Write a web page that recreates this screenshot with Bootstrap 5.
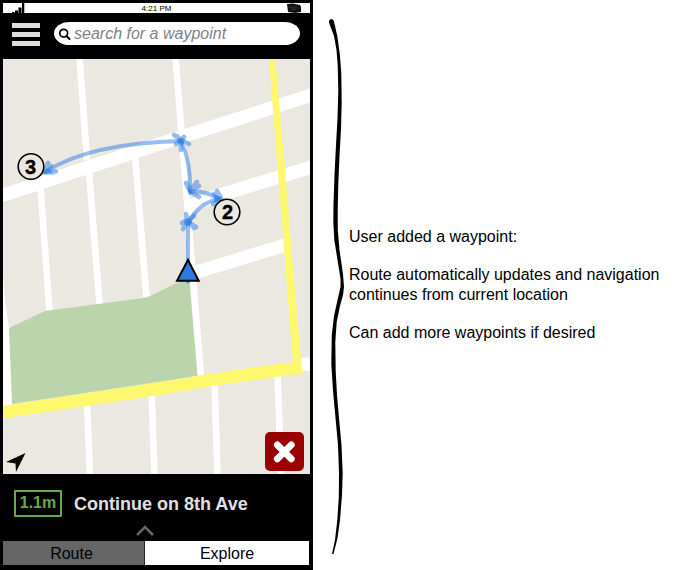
<!DOCTYPE html>
<html lang="en">
<head>
<meta charset="utf-8">
<meta name="viewport" content="width=device-width, initial-scale=1">
<title>Waypoint navigation</title>
<link href="https://cdn.jsdelivr.net/npm/bootstrap@5.3.0/dist/css/bootstrap.min.css" rel="stylesheet">
<style>
body{font-family:"Liberation Sans",Arial,sans-serif;font-size:16px;line-height:19.2px;color:#000;width:700px;height:570px;overflow:hidden}
.phone{width:313px;height:570px;background:#000;padding:3px 3px 0}
.statusbar{height:10px;width:307px;background:#fff;font-size:8px;line-height:11px}
.statusbar svg{display:block}
.topbar{height:46px;padding:9px 10px 12px 9px;width:307px}
.menu-btn{width:28px;margin-right:14px;line-height:0}
.menu-btn svg,.searchbox svg{display:block}
.searchbox{height:23px;width:246px;border-radius:16px/12px;padding-left:4px;color:#7f7f88;font-style:italic}
.map-area{width:307px;height:415px}
.map-area svg{display:block}
.close-btn{right:6px;bottom:3px;width:39px;height:39px;border-radius:5px;background:#900}
.directions{height:67px;padding:16px 0 0 11px;color:#e0e0e0;font-size:18px;font-weight:700}
.dist{width:48px;height:27px;border:2px solid #6aa84f;color:#6aa84f;font-size:16px;line-height:21px;border-radius:1px;margin-right:12px}
.street{padding-top:5px}
.expander{left:132px;bottom:4px}
.tabs{height:24px;width:306px;line-height:25px}
.tab-route{width:141px;padding-right:4px;background:#666}
.notes{padding:227px 0 0 5px}
.notes p{margin:0 0 19.2px;white-space:nowrap}
</style>
</head>
<body class="bg-white">
<div class="d-flex">
  <main class="phone d-flex flex-column flex-shrink-0">
    <div class="statusbar d-flex justify-content-center position-relative">
      <svg class="position-absolute start-0 top-0" width="24" height="10"><path d="M9 10V9h2.500v1zM12 10V7.500h3V10zM15.500 10V4.500h3V10zM19 10V0h2.300v10z"/></svg>
      <span>4:21 PM</span>
      <svg class="position-absolute end-0 top-0" width="25" height="10"><path d="M2 1l6 -.5 7 1.500 1 2v5L10 10 3 9z" fill="#111"/><path d="M4 4l4 1 4-2M6 7l5-1" stroke="#444" fill="none" stroke-width=".7"/></svg>
    </div>
    <div class="topbar d-flex">
      <div class="menu-btn"><svg width="28" height="24"><path d="M0 1h28v5H0zM0 10h28v5H0zM0 19h28v5H0z" fill="#ddd"/></svg></div>
      <div class="searchbox bg-white d-flex align-items-center">
        <svg width="16" height="18" viewBox="0 0 16 18"><circle cx="5.700" cy="8.200" r="3.900" fill="none" stroke="#000" stroke-width="1.700"/><path d="M8.500 11l3 3" stroke="#000" stroke-width="2" stroke-linecap="round"/></svg>
        <span>search for a waypoint</span>
      </div>
    </div>
    <div class="map-area position-relative">
      <svg width="307" height="415" viewBox="3 59 307 415">
        <path fill="#ebe8e1" d="M3 59h307v415H3z"/>
        <!-- side streets -->
        <g fill="none" stroke="#fff" stroke-width="6.600">
          <path d="M79.500 57L87 160M88.500 165L99.500 304M40 180L49.500 311M134.500 150L146.500 297M175.500 57L201 378M87 400L90 476M151.500 390L154.500 476M214.500 380L217.500 476M277.500 370L281 476"/>
          <path stroke-width="13.300" d="M-2 197L156 145L315 94M187 207Q205 200 225 193.500L315 166M192 273.500L287 244.500M296 365l16-1"/>
        </g>
        <path fill="#fff" d="M3 270L5 300 9 328l4 78H3z"/>
        <path fill="#bcd4ab" d="M9 328L45 311 147 297.500 189 277 197.500 376 12 404z"/>
        <!-- main roads -->
        <path fill="none" stroke="#fef86e" stroke-width="12.600" d="M0 412.500L160 388.500Q230 376 302 367.500"/>
        <path fill="#fef86e" d="M269 59h6.500L302 373l-9-10z"/>
        <!-- route -->
        <g fill="none" stroke="#2c7be5" stroke-opacity=".5" stroke-width="4" stroke-linecap="round">
          <path d="M45 172Q90 143 181 141"/>
          <path d="M181 141Q191 162 190 191"/>
          <path d="M190 191Q207 191 219 199"/>
          <path d="M219 199Q198 203 189 223"/>
          <path d="M188 222V281"/>
        </g>
        <!-- arrowheads -->
        <g fill="none" stroke="#2c7be5" stroke-opacity=".5" stroke-width="4.600" stroke-linecap="round" stroke-linejoin="round">
          <path d="M48 163L45 172.500L56 171.500M51 166L46 172L53 172.500"/>
          <path d="M174 135L183 141L189 144M176 144L181 141L184 137M181 150L181 141L177 136"/>
          <path d="M186 183L190 191L197 182M190 191L199 186M190 191L199 197"/>
          <path d="M217 191L221 198L213 204M214 194L221 198"/>
          <path d="M183 229L188 221L194 228M186 214L188 222L196 227M182 223L194 216"/>
          <path d="M184 274L188 281L192 274"/>
        </g>
        <g fill="#2c7be5" fill-opacity=".6"><circle cx="181" cy="141" r="3.500"/><path d="M187 187l7 7-5 1zM214 194l9 4-8 5z"/><circle cx="188" cy="222" r="4"/><path d="M43 174l5-6 5 5z"/></g>
        <path d="M188 260L198.700 280.800H177z" fill="#2c7be5" stroke="#000" stroke-width="2"/>
        <g fill="#ebe8e1" stroke="#000" stroke-width="1.600"><circle cx="31" cy="166.500" r="12.800"/><circle cx="227" cy="212" r="12.800"/></g>
        <g font-family="Liberation Sans,Arial,sans-serif" font-weight="700" font-size="20" text-anchor="middle" stroke="#000" stroke-width=".4"><text x="30.500" y="173.500">3</text><text x="227.500" y="219">2</text></g>
        <path d="M25.500 453L16 472l-.5-8.500L6 462z"/>
      </svg>
      <div class="close-btn position-absolute d-flex align-items-center justify-content-center" role="button" aria-label="Close"><svg width="23" height="23" viewBox="0 0 23 23"><path d="M4.300 4.800l14 14M18.300 4.800L4.300 18.800" stroke="#fff" stroke-width="6.800"  stroke-linecap="round"/></svg></div>
    </div>
    <div class="directions d-flex align-items-start position-relative">
      <div class="dist text-center">1.1m</div>
      <div class="street">Continue on 8th Ave</div>
      <svg class="expander position-absolute" width="20" height="13"><path d="M2 11L10 3l8 8" fill="none" stroke="#666" stroke-width="2.600"/></svg>
    </div>
    <div class="tabs d-flex text-center">
      <div class="tab-route">Route</div>
      <div class="flex-grow-1 bg-white border-start border-dark">Explore</div>
    </div>
  </main>
  <svg class="flex-shrink-0" width="31" height="570" viewBox="313 0 31 570"><path d="M331 19Q328 20 329.500 24L334 36 336.500 50 337.700 65 338.300 91 337.500 118 336 145 334.500 175 333.500 204 333.300 222 334.300 240 337.500 260 340.500 279V287L337.500 300 334 316 331.800 335 331.300 364 333 391 335.500 418 338 445 339 473 338.800 497 337.300 520 335 540 332 554H333.500L337.500 538 340 520 342 495 342.700 473 341.500 445 339 418 337 395 335.700 371 335.300 342 336.700 322 340 306 343 295 344 287 343 274 339.500 250 337.800 230 337.700 211 338.300 184 339.500 156 341 129 341.700 102 341.300 73 339.800 54 337.300 36 334.300 23Q334 19 331 19z"/></svg>
  <aside class="notes">
    <p>User added a waypoint:</p>
    <p>Route automatically updates and navigation<br>continues from current location</p>
    <p>Can add more waypoints if desired</p>
  </aside>
</div>
<script src="https://cdn.jsdelivr.net/npm/bootstrap@5.3.0/dist/js/bootstrap.bundle.min.js"></script>
</body>
</html>
